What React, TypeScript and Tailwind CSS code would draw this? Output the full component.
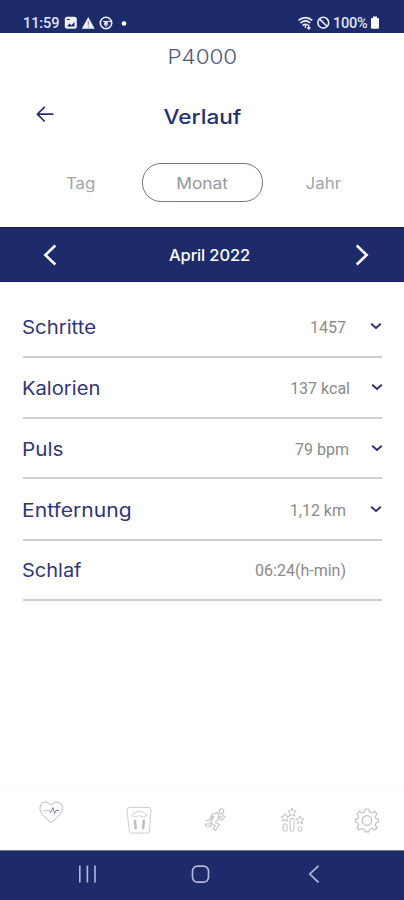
import React from "react";

const sans = "font-['Inter',sans-serif]";
const roboto = "font-['Roboto',sans-serif]";

type Row = {
  label: string;
  value: string;
  height: string;
  labelStyle: string;
  valueStyle: string;
  chevron: string | null;
};

const rows: Row[] = [
  { label: "Schritte", value: "1457", height: "h-[61px] pt-[2px]", labelStyle: "scale-x-[1.1]", valueStyle: "right-[36px]", chevron: "right-[0.5px] top-[23px]" },
  { label: "Kalorien", value: "137 kcal", height: "h-[61px] pt-[2px]", labelStyle: "scale-x-[1.09]", valueStyle: "right-[32px]", chevron: "-right-px top-[23px]" },
  { label: "Puls", value: "79 bpm", height: "h-[60px] pt-[3px]", labelStyle: "scale-x-[1.12]", valueStyle: "right-[33px]", chevron: "-right-px top-[23px]" },
  { label: "Entfernung", value: "1,12 km", height: "h-[62px] pt-[3px]", labelStyle: "scale-x-[1.14]", valueStyle: "right-[36px]", chevron: "right-[0.5px] top-[23.5px]" },
  { label: "Schlaf", value: "06:24(h-min)", height: "h-[60px] pt-[2px]", labelStyle: "scale-x-[1.08]", valueStyle: "right-[36px]", chevron: null },
];

function StatusBar() {
  return (
    <header className={`flex h-[33px] items-end justify-between bg-[#1e2b6b] pr-[24px] pb-[2px] pl-[23px] text-white ${roboto}`}>
      <div className="flex h-[16px] items-center">
        <span className="w-[41px] pt-[2px] text-[14.5px] leading-none font-medium tracking-[-0.1px] text-[#e0e3f2]">11:59</span>
        <svg width="64" height="16" viewBox="0 0 64 16" fill="none">
          <rect x="0.8" y="1.8" width="12" height="12" rx="2.5" fill="#edeef7" />
          <path d="M3 11.5 5.5 8.5 7.3 10.2 10.5 7V11.5Z" fill="#1e2b6b" />
          <path d="M3 4.5H6" stroke="#1e2b6b" />
          <path d="M24.3 2 30.7 13.8H17.8Z" fill="#edeef7" />
          <path d="M24.3 6V10M24.3 11V12.4" stroke="#7b83aa" />
          <circle cx="42" cy="8" r="5.7" stroke="#edeef7" strokeWidth="1.6" />
          <path d="M39 6.4H47.5M40.3 9.3 42 11.5 44 9.3" stroke="#edeef7" strokeWidth="1" />
          <circle cx="42" cy="8.2" r="1.8" fill="#edeef7" />
          <circle cx="60" cy="8.5" r="2.3" fill="#fff" />
        </svg>
      </div>
      <div className="flex h-[16px] items-center">
        <svg width="36" height="16" viewBox="0 0 36 16" fill="none" stroke="#e8eaf5">
          <path d="M1.5 5.4C5.6 1.7 11.3 1.7 15.2 5.4M3.6 8C6.7 5.2 10.3 5.2 13.2 8M5.8 10.5C7.8 8.8 9.2 8.8 11 10.5" strokeWidth="1.7" />
          <path d="M8.4 10.3V13M11.8 9.8V14M10.2 12.5 11.8 14 13.4 12.5" strokeWidth="1.3" />
          <circle cx="26.3" cy="7.7" r="5.4" strokeWidth="1.6" />
          <path d="M22.5 3.9 30.1 11.5" strokeWidth="1.6" />
        </svg>
        <span className="w-[37px] pt-[2px] text-[14.5px] leading-none font-medium tracking-[-0.2px] text-[#e0e3f2]">100%</span>
        <svg width="10" height="16" viewBox="0 0 10 16">
          <path d="M3 1.5H7V3H8.2Q9 3 9 4V12.5Q9 13.7 7.8 13.7H2.2Q1 13.7 1 12.5V4Q1 3 1.8 3H3Z" fill="#fff" />
        </svg>
      </div>
    </header>
  );
}

function Header() {
  return (
    <>
      <div className={`flex h-[47px] items-center justify-center pt-[3px] text-[19.5px] font-light text-[#555a7b] ${sans}`}>
        <span className="inline-block scale-x-[1.15]">P4000</span>
      </div>
      <div className="grid h-[72px] grid-cols-[1fr_auto_1fr] items-center">
        <svg className="mb-[4px] ml-[35px]" width="20" height="20" viewBox="0 0 20 20" fill="none" stroke="#292f70" strokeWidth="1.7">
          <path d="M18.5 10.2H2.8M9.7 2.8 2.4 10.2 9.7 17.5" />
        </svg>
        <h1 className={`scale-x-[1.13] pt-px text-[20px] leading-none font-[450] text-[#27306e] ${sans}`}>Verlauf</h1>
      </div>
    </>
  );
}

function Tabs() {
  return (
    <nav className={`flex h-[75px] items-start justify-center pt-[11px] text-[15.5px] text-[#a3a5a8] ${sans}`}>
      <button className="flex h-[39px] w-[121px] items-center justify-center pt-[2px]"><span className="scale-x-[1.08]">Tag</span></button>
      <button className="flex h-[39px] w-[121px] items-center justify-center rounded-[19px] border border-[#737681] pt-[2px] text-[#96989d]"><span className="scale-x-[1.12]">Monat</span></button>
      <button className="flex h-[39px] w-[121px] items-center justify-center pt-[2px]"><span className="scale-x-[1.09]">Jahr</span></button>
    </nav>
  );
}

function MonthBar() {
  return (
    <div className="flex h-[55px] items-center justify-between border-y border-[#141d5d] bg-[#1e2b6b] pr-[33px] pl-[41px]">
      <svg width="18" height="26" viewBox="0 0 18 26" fill="none" stroke="#fff" strokeWidth="2.5"><path d="M14.3 3.5 4.3 13 14.3 22.5" /></svg>
      <span className={`pt-px pl-[7px] text-[16.5px] font-medium tracking-[-0.15px] text-white ${sans}`}>April 2022</span>
      <svg width="18" height="26" viewBox="0 0 18 26" fill="none" stroke="#fff" strokeWidth="2.5"><path d="M3.7 3.5 13.7 13 3.7 22.5" /></svg>
    </div>
  );
}

function History() {
  return (
    <main className="h-[508px] pt-[15px] pr-[22px] pl-[23px]">
      {rows.map((row) => (
        <div key={row.label} className={`relative flex items-center justify-between border-b-2 border-[#cecece] ${row.height}`}>
          <span className={`-ml-px origin-left text-[18.5px] text-[#303674] ${sans} ${row.labelStyle}`}>{row.label}</span>
          <span className={`absolute text-[16px] whitespace-nowrap text-[#8b8b8b] ${roboto} ${row.valueStyle}`}>{row.value}</span>
          {row.chevron && (
            <svg className={`absolute ${row.chevron}`} width="12" height="12" viewBox="0 0 12 12" fill="none" stroke="#292c70" strokeWidth="1.8">
              <path d="M1.2 3.8 6 8 10.8 3.8" />
            </svg>
          )}
        </div>
      ))}
    </main>
  );
}

function BottomTabs() {
  return (
    <nav className="flex h-[60px] items-start border-t border-[#f9f9fa] pt-[9px] pl-[37px]">
      <svg width="28" height="28" viewBox="0 0 28 28" fill="none" stroke="#b9bac5" strokeWidth="1">
        <path d="M14 22.5C10.5 19.5 3 14.5 3 8.5 3 1 11 .5 14 5.5 17 .5 25.5 1 25.5 8.5 25.5 14.5 17.5 19.5 14 22.5Z" />
        <path d="M6 10.5H12" stroke="#c8cada" />
        <path d="M12 10.5 13.5 12.5 16 7.5 17.5 13.5 19 10.5H22" stroke="#8589a7" />
      </svg>
      <svg className="mt-[6px] ml-[60px]" width="28" height="28" viewBox="0 0 28 28" fill="none" stroke="#cecfd4">
        <path d="M4.5 1.5H24Q26 1.5 26 4L24.5 25Q24.3 27 22.5 27H6.5Q4.5 27 4.2 25L2 4Q2 1.5 4.5 1.5Z" />
        <path d="M6.5 9.5C9.5 4.3 19 4.3 22 9.5L18.5 11Q14.2 8 10 11Z" />
        <path d="M10 15V17.7M10.5 19.5V22M18.7 15V17.7M18.2 19.5V22" strokeWidth="2.8" stroke="#c0c1c5" strokeLinecap="round" />
      </svg>
      <svg className="mt-[6px] ml-[48px]" width="28" height="28" viewBox="0 0 28 28" fill="none" stroke="#c4c5c7" strokeWidth="1.1" strokeLinejoin="round">
        <ellipse cx="20.5" cy="5.3" rx="2.2" ry="2.6" />
        <path d="M11 8.5 15.5 6.5 18 9 17 13 14.5 16.5 18.5 18.5 14.5 24.5 12 22.5 14.3 19.5 10.5 17.5 9.5 20.5 4.5 20V18H8.5L11 14 13 10 11 10.7 10.5 14 8.3 13.2ZM18 10 20 12 22 9.5 24 10.5 21.5 14 17.5 13M5 14.5H8" />
      </svg>
      <svg className="mt-[6px] ml-[49px]" width="28" height="28" viewBox="0 0 28 28" fill="none" stroke="#bfc0c3" strokeWidth="1">
        <path d="m14 2 1.2 2.7 3 .4-2.1 2 .5 3-2.6-1.5-2.6 1.5.5-3-2.1-2 3-.4ZM7 7.5l1.1 2.6 2.9.3-2.2 2 .7 2.9L7 13.8l-2.5 1.5.7-2.9-2.2-2 2.9-.3ZM21.8 10l1.1 2.6 2.9.3-2.2 2 .7 2.9-2.5-1.5-2.5 1.5.7-2.9-2.2-2 2.9-.3Z" />
        <rect x="5.2" y="18" width="3.8" height="7" rx="1" /><rect x="12.2" y="12.5" width="3.8" height="12.5" rx="1" /><rect x="20" y="21" width="3.8" height="4" rx="1" />
      </svg>
      <svg className="mt-[6px] ml-[47px]" width="28" height="28" viewBox="0 0 28 28" fill="none" stroke="#c0c1c4" strokeWidth="1.2" strokeLinejoin="round">
        <path d="M12.2 3H15.8L16.5 6 19 7 21.5 5.2 24 7.8 22.3 10.5 23.2 12.8 25.5 13.2V16L23.2 16.8 22.3 19.2 24 21.8 21.5 24 19 22.5 16.5 23.5 15.8 25.8H12.2L11.5 23.5 9 22.5 6.5 24 4 21.8 5.7 19.2 4.8 16.8 2.5 16V13.2L4.8 12.8 5.7 10.5 4 7.8 6.5 5.2 9 7 11.5 6Z" />
        <circle cx="14" cy="14.5" r="4.8" />
      </svg>
    </nav>
  );
}

function SystemNav() {
  return (
    <footer className="flex h-[50px] items-center justify-between border-t border-[#727894] bg-[#1e2b6b] pr-[79px] pb-[3px] pl-[77px]">
      <svg width="20" height="20" viewBox="0 0 20 20" stroke="#b4b9dc" strokeWidth="1.6"><path d="M2.8 1.5V18.5M10.4 1.5V18.5M18 1.5V18.5" /></svg>
      <svg width="20" height="20" viewBox="0 0 20 20" fill="none" stroke="#b4b9dc" strokeWidth="1.7"><rect x="1.5" y="2.2" width="16" height="16" rx="5" /></svg>
      <svg width="20" height="20" viewBox="0 0 20 20" fill="none" stroke="#b4b9dc" strokeWidth="1.7"><path d="M13.5 1.8 4.8 10 13.5 18.3" /></svg>
    </footer>
  );
}

export default function App() {
  return (
    <div className="h-[900px] w-[404px] overflow-hidden bg-white">
      <StatusBar />
      <Header />
      <Tabs />
      <MonthBar />
      <History />
      <BottomTabs />
      <SystemNav />
    </div>
  );
}
